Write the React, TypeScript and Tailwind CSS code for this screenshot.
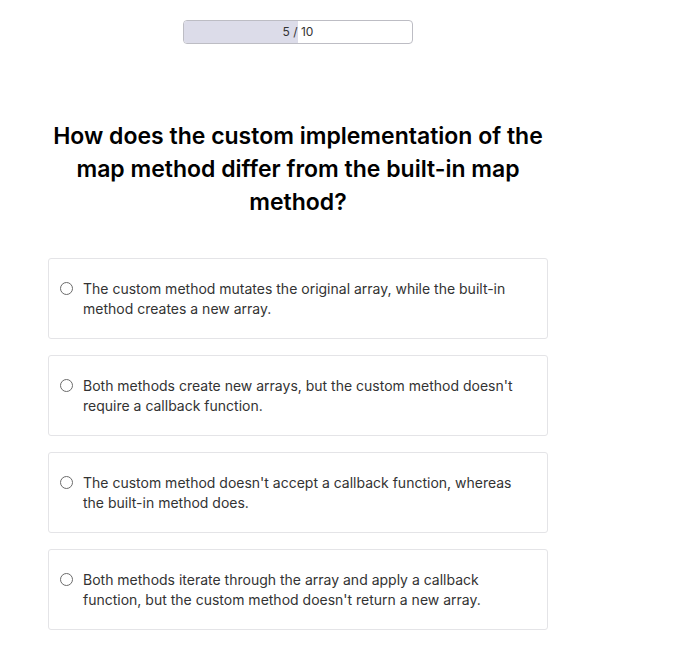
const options = [
  "The custom method mutates the original array, while the built-in method creates a new array.",
  "Both methods create new arrays, but the custom method doesn't require a callback function.",
  "The custom method doesn't accept a callback function, whereas the built-in method does.",
  "Both methods iterate through the array and apply a callback function, but the custom method doesn't return a new array.",
];

export default function App() {
  return (
    <div className="min-h-screen bg-white font-['Inter',sans-serif] text-[#222]">
      <div className="ml-[48px] w-[500px] flex flex-col items-center pt-[20px]">
        {/* progress */}
        <div className="relative w-[230px] h-[24px] rounded-[4px] border border-[#bdbdc4] overflow-hidden">
          <div className="absolute inset-y-0 left-0 w-1/2 bg-[#dcdce9]" />
          <span className="relative flex h-full items-center justify-center text-[12px] text-[#333]">
            5 / 10
          </span>
        </div>

        <h1 className="mt-[76px] text-center text-[23px] leading-[33px] font-semibold tracking-[0px] text-black">
          How does the custom implementation of the map method differ from the built-in map method?
        </h1>

        <div className="mt-[39px] w-full flex flex-col gap-4">
          {options.map((opt) => (
            <label
              key={opt}
              className="flex items-start gap-[10px] w-full h-[81px] rounded-[3px] border border-[#e4e4e7] pl-[11px] pr-[30px] pt-[20px] cursor-pointer"
            >
              <span className="mt-[3px] shrink-0 w-[13px] h-[13px] rounded-full border border-[#6b6b6b] bg-white" />
              <span className="text-[14px] leading-[20px] tracking-[0px] text-[#333]">{opt}</span>
            </label>
          ))}
        </div>
      </div>
    </div>
  );
}
